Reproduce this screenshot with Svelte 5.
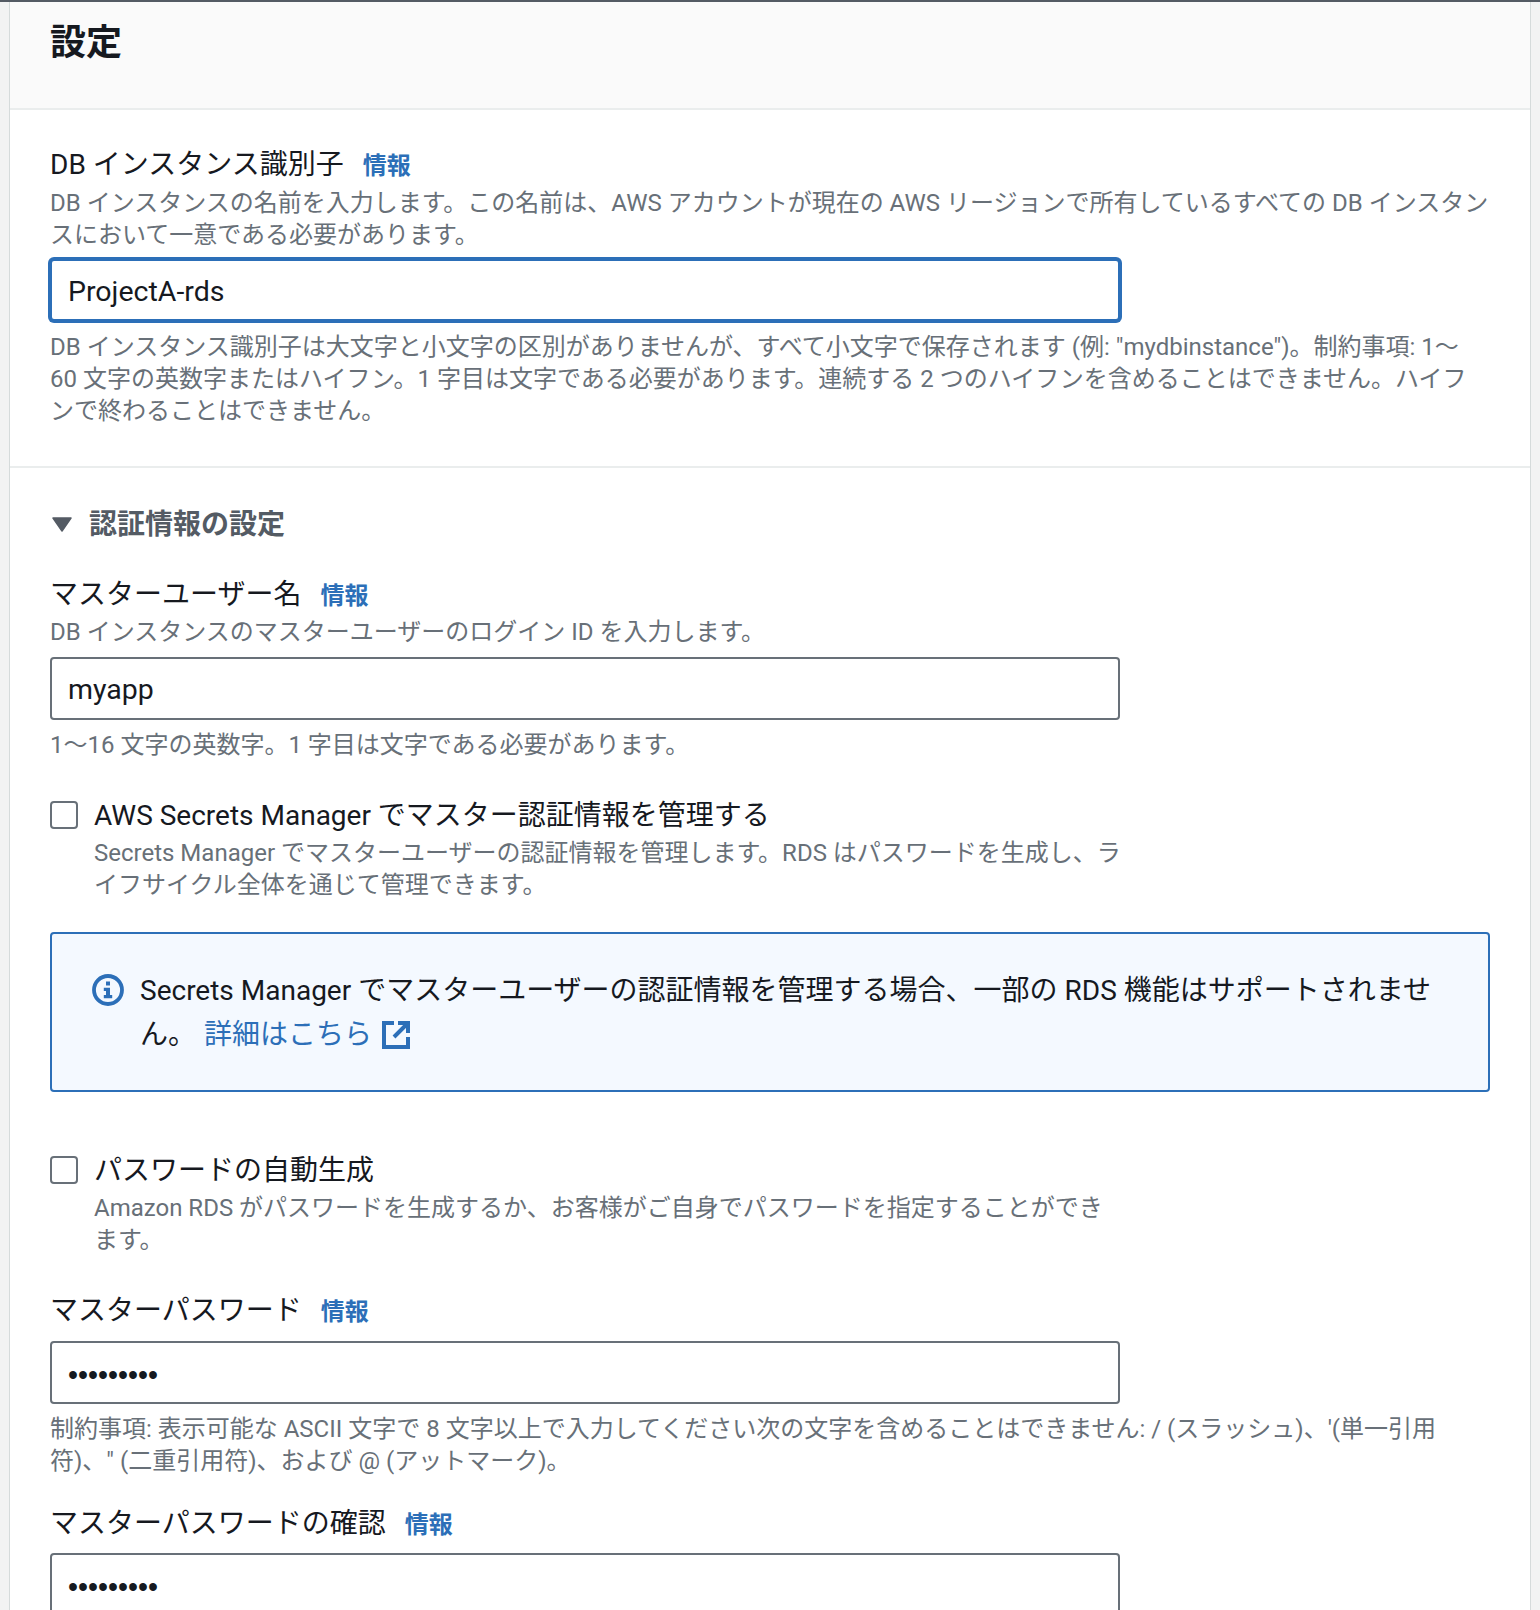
<script>
  let identifier = 'ProjectA-rds';
  let username = 'myapp';
  let password = 'abcdefghi';
</script>

<div class="page">
  <div class="card">
    <header class="head">
      <h2>設定</h2>
    </header>

    <section class="first">
      <div class="label">DB インスタンス識別子<a class="info" href="#top">情報</a></div>
      <p class="desc">DB インスタンスの名前を入力します。この名前は、AWS アカウントが現在の AWS リージョンで所有しているすべての DB インスタンスにおいて一意である必要があります。</p>
      <input class="field focused" type="text" bind:value={identifier} />
      <p class="desc">DB インスタンス識別子は大文字と小文字の区別がありませんが、すべて小文字で保存されます (例: "mydbinstance")。制約事項: 1〜<br />60 文字の英数字またはハイフン。1 字目は文字である必要があります。連続する 2 つのハイフンを含めることはできません。ハイフ<br />ンで終わることはできません。</p>
    </section>

    <section class="second">
      <div class="expander">
        <svg width="20" height="15" viewBox="0 0 20 15"><path d="M1 1h18L10 14z" fill="#545b64" stroke="#545b64" stroke-width="1.5" stroke-linejoin="round" /></svg>
        <h3>認証情報の設定</h3>
      </div>

      <div class="label user">マスターユーザー名<a class="info" href="#top">情報</a></div>
      <p class="desc">DB インスタンスのマスターユーザーのログイン ID を入力します。</p>
      <input class="field" type="text" bind:value={username} />
      <p class="desc">1〜16 文字の英数字。1 字目は文字である必要があります。</p>

      <label class="check managed">
        <input type="checkbox" />
        <span class="check-text">
          <span class="label">AWS Secrets Manager でマスター認証情報を管理する</span>
          <span class="desc">Secrets Manager でマスターユーザーの認証情報を管理します。RDS はパスワードを生成し、ラ<br />イフサイクル全体を通じて管理できます。</span>
        </span>
      </label>

      <div class="alert">
        <svg class="alert-icon" width="32" height="32" viewBox="0 0 16 16">
          <circle cx="8" cy="8" r="7" fill="none" stroke="#2c6fb8" stroke-width="1.9" />
          <path d="M7 3.8h2v1.9H7zM5.9 6.9h3.1v3.6h1.1v1.6H5.9v-1.6H7V8.5H5.9z" fill="#2c6fb8" />
        </svg>
        <p>Secrets Manager でマスターユーザーの認証情報を管理する場合、一部の RDS 機能はサポートされません。<a class="more" href="#top">詳細はこちら</a><svg class="ext" width="28" height="28" viewBox="0 0 14 14" fill="none" stroke="#2c6fb8" stroke-width="2"><path d="M6 1H1v12h12V8M8 1h5v5M13 1L6 8" /></svg></p>
      </div>

      <label class="check generate">
        <input type="checkbox" />
        <span class="check-text">
          <span class="label">パスワードの自動生成</span>
          <span class="desc">Amazon RDS がパスワードを生成するか、お客様がご自身でパスワードを指定することができ<br />ます。</span>
        </span>
      </label>

      <div class="label pass">マスターパスワード<a class="info" href="#top">情報</a></div>
      <input class="field secret" type="password" bind:value={password} />
      <p class="desc">制約事項: 表示可能な ASCII 文字で 8 文字以上で入力してください次の文字を含めることはできません: / (スラッシュ)、'(単一引用符)、" (二重引用符)、および @ (アットマーク)。</p>

      <div class="label confirm">マスターパスワードの確認<a class="info" href="#top">情報</a></div>
      <input class="field secret" type="password" bind:value={password} />
    </section>
  </div>
</div>

<style>
  :global(body) {
    background: #f2f3f3;
  }

  .page {
    height: 1610px;
    overflow: hidden;
    padding: 0 9px 0 9px;
    border-top: 2px solid #545b64;
    box-sizing: border-box;
    font-family: Roboto, "Noto Sans CJK JP", sans-serif;
    color: #16191f;
  }

  .card {
    background: #fff;
    border-left: 1px solid #d5dbdb;
    border-right: 1px solid #d5dbdb;
    min-height: 1608px;
  }

  .head {
    box-sizing: border-box;
    padding: 19px 40px 0;
    background: #fafafa;
    border-bottom: 2px solid #eaeded;
    height: 108px;
  }

  h2 {
    margin: 0;
    font-size: 36px;
    line-height: 44px;
    font-weight: 700;
  }

  section {
    padding: 0 40px;
  }

  .first {
    padding-top: 36px;
    padding-bottom: 40px;
    border-bottom: 2px solid #eaeded;
  }

  .first .label {
    padding-top: 1px;
    margin-bottom: 3px;
  }

  .second {
    padding-top: 38px;
  }

  .label {
    display: block;
    padding-top: 2px;
    font-size: 28px;
    line-height: 36px;
    margin-bottom: 2px;
  }

  .desc {
    display: block;
    padding-top: 1px;
    margin: 0 0 -1px;
    font-size: 24px;
    line-height: 32px;
    color: #687078;
  }

  .info {
    margin-left: 19px;
    font-size: 24px;
    line-height: 1;
    font-weight: 700;
    color: #2c6fb8;
    text-decoration: none;
  }

  .field {
    display: block;
    box-sizing: border-box;
    width: 1070px;
    height: 63px;
    margin: 10px 0 8px;
    padding: 2px 16px 0;
    border: 2px solid #687078;
    border-radius: 4px;
    background: #fff;
    font: inherit;
    font-size: 28.5px;
    color: #16191f;
    outline: none;
  }

  .secret {
    font-family: "Liberation Sans", sans-serif;
    font-size: 28.6px;
    padding-top: 6px;
  }

  .focused {
    height: 62px;
    margin-top: 9px;
    margin-bottom: 9px;
    border-color: #2c6fb8;
    box-shadow: 0 0 0 2px #2c6fb8;
  }

  .expander {
    display: flex;
    align-items: center;
    gap: 17px;
    padding-left: 2px;
    margin-bottom: 33px;
  }

  h3 {
    margin: 0;
    padding-top: 1px;
    margin-bottom: -1px;
    font-size: 28px;
    line-height: 36px;
    font-weight: 700;
    color: #545b64;
  }

  .check {
    display: flex;
    gap: 16px;
    width: 1070px;
  }

  .check input {
    appearance: none;
    flex: none;
    box-sizing: border-box;
    width: 28px;
    height: 28px;
    margin: 5px 0 0;
    border: 2px solid #687078;
    border-radius: 4px;
    background: #fff;
  }

  .check-text {
    flex: none;
    width: 1060px;
  }

  .managed {
    margin-top: 36px;
  }

  .generate {
    margin-top: 59px;
  }

  .alert {
    display: flex;
    gap: 16px;
    box-sizing: border-box;
    height: 160px;
    margin-top: 32px;
    padding: 34px 42px 34px 40px;
    border: 2px solid #2c6fb8;
    border-radius: 4px;
    background: #f4f9ff;
  }

  .alert-icon {
    flex: none;
    margin-top: 6px;
  }

  .alert p {
    margin: 1px 0 0;
    font-size: 28px;
    line-height: 44px;
  }

  .more {
    margin-left: 8px;
    color: #2c6fb8;
    text-decoration: none;
  }

  .ext {
    margin-left: 10px;
    vertical-align: -5px;
  }

  .pass {
    margin-top: 36px;
  }

  .pass + .field {
    margin-top: 12px;
  }

  .confirm + .field {
    margin-top: 11px;
  }

  .confirm {
    margin-top: 28px;
  }
</style>
